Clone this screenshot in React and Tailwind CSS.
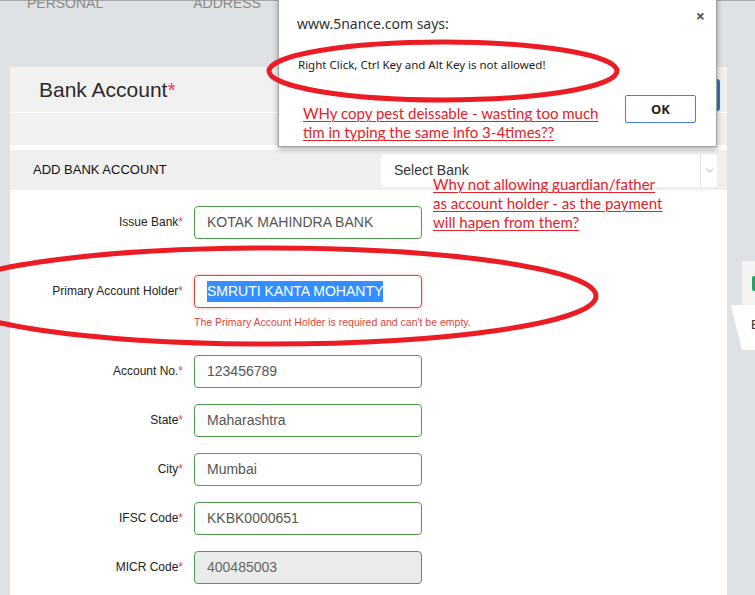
import { ChevronDown } from "lucide-react";

const fields = [
  { label: "Issue Bank", value: "KOTAK MAHINDRA BANK" },
  { label: "Primary Account Holder", value: "SMRUTI KANTA MOHANTY", error: true },
  { label: "Account No.", value: "123456789" },
  { label: "State", value: "Maharashtra" },
  { label: "City", value: "Mumbai" },
  { label: "IFSC Code", value: "KKBK0000651" },
  { label: "MICR Code", value: "400485003", disabled: true },
];

function Field({ label, value, error, disabled }) {
  return (
    <div className="flex items-start">
      <label className="w-[173px] shrink-0 pt-[7px] text-right text-[12px] text-[#222]">
        {label}
        <span className="text-[#e0475a]">*</span>
      </label>
      <div className="ml-[11px]">
        <div
          className={
            "flex h-[33px] w-[228px] items-center rounded-[4px] border px-[12px] text-[14px] " +
            (error
              ? "border-[#e0453e] shadow-[0_0_3px_rgba(224,69,62,0.5)]"
              : disabled
              ? "border-[#4e9a4e] bg-[#ebebeb] text-[#666]"
              : "border-[#4e9a4e] text-[#555]")
          }
        >
          {error ? <span className="bg-[#338fff] text-white">{value}</span> : value}
        </div>
        {error && (
          <p className="mb-[8px] mt-[7px] text-[10.5px] text-[#e0453e]">
            The Primary Account Holder is required and can't be empty.
          </p>
        )}
      </div>
    </div>
  );
}

export default function App() {
  return (
    <div className="relative h-[595px] w-[755px] overflow-hidden bg-[#dfe2e5] font-['Liberation_Sans',Arial,sans-serif]">
      {/* tabs (scrolled off the top) */}
      <div className="flex h-[67px] border-t border-[#a8a8a8]">
        <span className="ml-[27px] mt-[-8px] text-[14px] text-[#8a8a8a]">PERSONAL</span>
        <span className="ml-[90px] mt-[-8px] text-[14px] text-[#8a8a8a]">ADDRESS</span>
      </div>

      <div className="flex">
        <div className="ml-[10px] w-[717px] shrink-0 bg-white">
          <div className="flex h-[45px] items-center justify-between bg-[#f1f1f1] pl-[29px]">
            <h2 className="text-[21px] text-[#2a2a2a]">
              Bank Account<span className="text-[#e0475a]">*</span>
            </h2>
            <div className="mr-[7px] mt-[10px] h-[32px] w-[40px] rounded-[3px] bg-[#2a7bbf]" />
          </div>
          <div className="h-[33px] border-t border-white bg-[#f1f1f1]" />
          <div className="mt-[5px] flex h-[40px] items-center justify-between bg-[#f0f0f0] pl-[23px] pr-[10px]">
            <span className="text-[13px] text-[#111]">ADD BANK ACCOUNT</span>
            <div className="flex h-[33px] w-[336px] items-center rounded-[3px] bg-white">
              <span className="flex-1 pl-[13px] text-[14px] text-[#333]">Select Bank</span>
              <div className="flex h-full w-[17px] items-center justify-center border-l border-[#e2e2e2]">
                <ChevronDown size={13} className="text-[#999]" strokeWidth={1.5} />
              </div>
            </div>
          </div>
          <div className="flex flex-col gap-[16px] pb-[20px] pt-[16px]">
            <div className="mb-[20px]">
              <Field {...fields[0]} />
            </div>
            {fields.slice(1).map((f) => (
              <Field key={f.label} {...f} />
            ))}
          </div>
        </div>

        {/* neighbouring panel, cut by the window edge */}
        <div className="ml-[15px] mt-[194px] flex flex-col">
          <div className="flex h-[44px] w-[13px] items-center justify-end bg-[#f4f4f4]">
            <div className="h-[15px] w-[3px] rounded-l-[2px] bg-[#2e9e6b]" />
          </div>
          <div className="ml-[-11px] flex h-[45px] w-[24px] items-start bg-white pl-[20px] pt-[10px] text-[13px] text-[#333] [clip-path:polygon(0_0,100%_0,100%_100%,45%_100%)]">
            E
          </div>
        </div>
      </div>

      {/* browser alert */}
      <div className="absolute left-[278px] top-[-4px] h-[151px] w-[439px] border border-[#a0a0a0] bg-white shadow-[0_2px_6px_rgba(0,0,0,0.35)] font-['Noto_Sans',sans-serif]">
        <span className="absolute right-[11px] top-[7px] text-[16px] font-bold text-[#555]">×</span>
        <p className="ml-[18px] mt-[16px] text-[14px] text-[#333]">www.5nance.com says:</p>
        <p className="ml-[19px] mt-[22px] text-[11.5px] text-[#222]">
          Right Click, Ctrl Key and Alt Key is not allowed!
        </p>
        <div className="mt-[22px] flex justify-end pr-[20px]">
          <button className="h-[28px] w-[71px] rounded-[2px] border border-[#4a7ed6] text-[13px] font-bold text-[#222]">
            OK
          </button>
        </div>
      </div>

      {/* annotations */}
      <div className="absolute left-[303px] top-[104px] text-[15px] leading-[19px] text-[#e8202a] font-['Lato',sans-serif]">
        <p className="underline decoration-1 underline-offset-2">WHy copy pest deissable - wasting too much </p>
        <p className="underline decoration-1 underline-offset-2">tim in typing the same info 3-4times??</p>
      </div>
      <div className="absolute left-[433px] top-[175px] text-[15px] leading-[19px] text-[#e8202a] font-['Lato',sans-serif]">
        <p className="underline decoration-1 underline-offset-2">Why not allowing guardian/father</p>
        <p className="underline decoration-1 underline-offset-2">as account holder - as the payment </p>
        <p className="underline decoration-1 underline-offset-2">will hapen from them?</p>
      </div>

      <svg className="pointer-events-none absolute inset-0" width="755" height="595">
        <ellipse cx="443" cy="71" rx="174" ry="29" fill="none" stroke="#ec1c24" strokeWidth="5" />
        <ellipse cx="270" cy="296" rx="326" ry="48" fill="none" stroke="#ec1c24" strokeWidth="5" />
      </svg>
    </div>
  );
}
